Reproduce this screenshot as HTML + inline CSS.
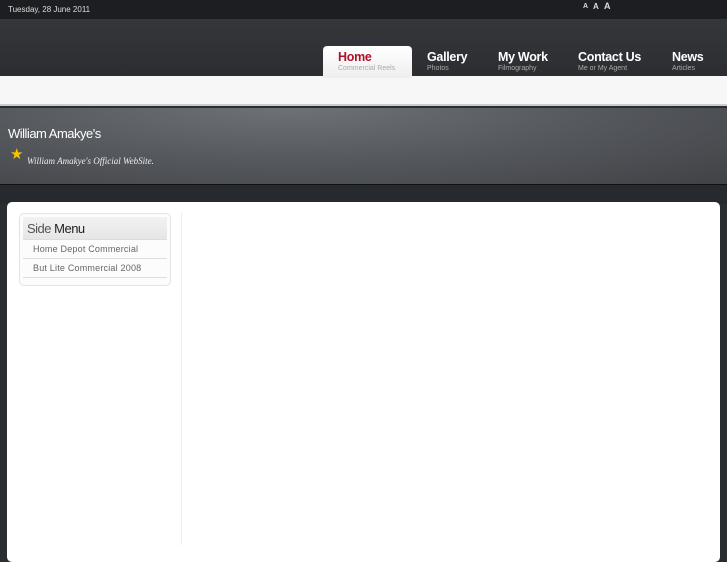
<!DOCTYPE html>
<html><head><style>
*{margin:0;padding:0;box-sizing:border-box}
body{width:727px;height:545px;overflow:hidden;background:#2a2d31;font-family:"Liberation Sans",sans-serif;position:relative}
.top{position:absolute;left:0;top:0;width:727px;height:19px;background:#1c1e21;}
.date{position:absolute;left:8px;top:5px;font-size:8px;color:#ddd}
.aa{position:absolute;top:2px;font-size:8px;color:#ddd;font-weight:bold}
.hdr{position:absolute;left:0;top:19px;width:727px;height:57px;background:linear-gradient(#34373b,#2b2d31)}
.band{position:absolute;left:0;top:76px;width:727px;height:30px;background:#f7f7f7;border-bottom:2px solid #ccc}
.tab{position:absolute;left:323px;top:46px;width:89px;height:32px;background:linear-gradient(#fff,#eee);border-radius:4px 4px 0 0}
.nav{position:absolute;top:50px;color:#fff;font-weight:bold;font-size:12.5px;letter-spacing:-0.3px}
.nav small{display:block;font-weight:normal;font-size:7px;color:#aaa;margin-top:1px;letter-spacing:0}
.banner{position:absolute;left:0;top:108px;width:727px;height:76px;background:radial-gradient(ellipse at 40% 0%,#6e7176,#55585d 50%,#404246);}
.strip{position:absolute;left:0;top:184px;width:727px;height:20px;background:#26292d;border-top:1px solid #111}
.title{position:absolute;left:8px;top:126px;color:#fff;font-size:13px;letter-spacing:-0.5px}
.star{position:absolute;left:10px;top:145px;color:#f5c400;font-size:15px}
.sub{position:absolute;left:27px;top:156px;color:#eee;font-family:"Liberation Serif",serif;font-style:italic;font-size:9px}
.main{position:absolute;left:7px;top:202px;width:713px;height:360px;background:#fff;border-radius:5px}
.side{position:absolute;left:19px;top:213px;width:152px;height:73px;border:1px solid #e3e3e3;border-radius:5px;background:#fcfcfc}
.sh{margin:3px 3px 0;height:22px;background:linear-gradient(#f2f2f2,#e6e6e6);font-size:13px;color:#555;padding:4px 4px;letter-spacing:-0.5px}
.sh b{color:#222;font-weight:normal}
.it{margin:0 3px;height:19px;border-top:1px solid #ddd;font-size:9px;color:#666;padding:4px 10px;letter-spacing:0.2px}
.vl{position:absolute;left:181px;top:213px;width:1px;height:332px;background:#eee}
</style></head><body>
<div class="top"><div class="date">Tuesday, 28 June 2011</div>
<div class="aa" style="left:583px;font-size:7px;top:3px">A</div><div class="aa" style="left:593px">A</div><div class="aa" style="left:604px;font-size:9px;top:1px">A</div></div>
<div class="hdr"></div>
<div class="band"></div>
<div class="tab"></div>
<div class="nav" style="left:338px;color:#b0102a">Home<small>Commercial Reels</small></div>
<div class="nav" style="left:427px">Gallery<small>Photos</small></div>
<div class="nav" style="left:498px">My Work<small>Filmography</small></div>
<div class="nav" style="left:578px">Contact Us<small>Me or My Agent</small></div>
<div class="nav" style="left:672px">News<small>Articles</small></div>
<div class="banner"></div>
<div class="title">William Amakye's</div>
<div class="star">★</div>
<div class="sub">William Amakye's Official WebSite.</div>
<div class="strip"></div>
<div class="main"></div>
<div class="side"><div class="sh">Side <b>Menu</b></div><div class="it">Home Depot Commercial</div><div class="it">But Lite Commercial 2008</div><div class="it" style="height:4px;padding:0"></div></div>
<div class="vl"></div>
</body></html>
